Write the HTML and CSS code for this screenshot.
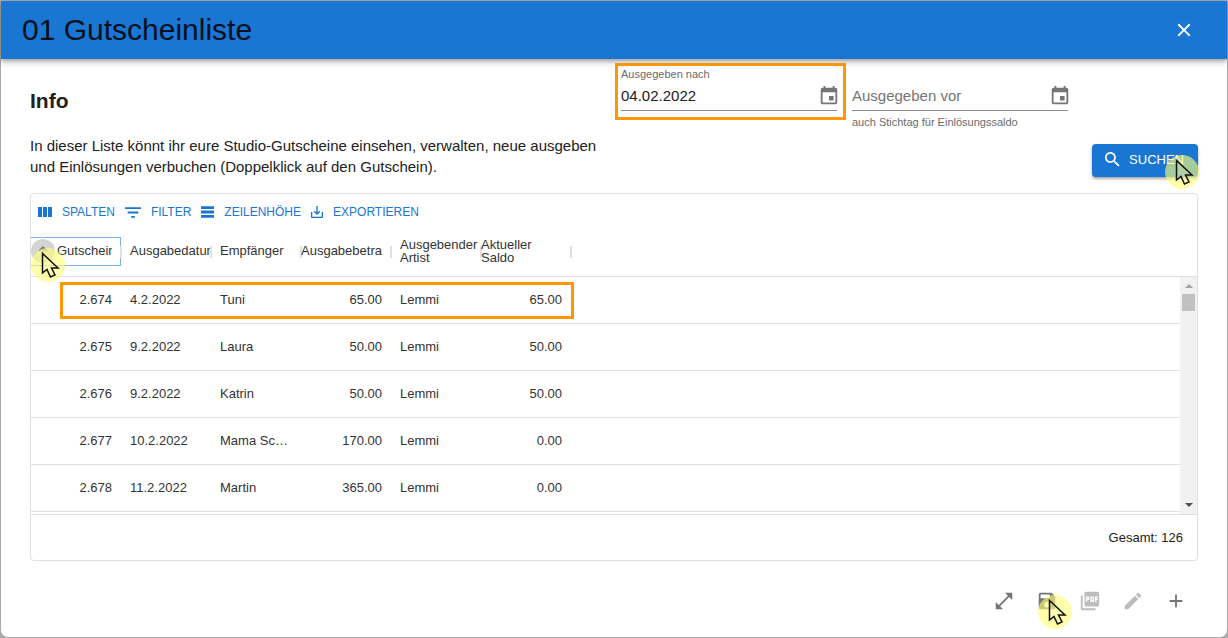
FILE: index.html
```html
<!DOCTYPE html>
<html lang="de">
<head>
<meta charset="utf-8">
<title>Gutscheinliste</title>
<link rel="stylesheet" href="styles.css">
</head>
<body>
<svg class="defs" aria-hidden="true">
  <symbol id="pointer" viewBox="0 0 36 36">
    <circle cx="18" cy="18" r="17" fill="rgb(255,255,120)" fill-opacity=".62"/>
    <path d="M12.500 6.500v19.500l4.500-3.500 3.500 7.500 4.500-2-3.500-7h6.500z" fill="#fff" fill-opacity=".1" stroke="#111" stroke-width="1.500"/>
  </symbol>
  <symbol id="event" viewBox="0 0 24 24">
    <path d="M17 12h-5v5h5v-5zM16 1v2H8V1H6v2H5c-1.110 0-1.990.9-1.990 2L3 19c0 1.100.89 2 2 2h14c1.100 0 2-.9 2-2V5c0-1.100-.9-2-2-2h-1V1h-2zm3 18H5V8h14v11z"/>
  </symbol>
</svg>
<main class="dialog">
  <header class="bar">
    <h1 class="bar-title">01 Gutscheinliste</h1>
    <button class="icon-btn close" aria-label="Schließen">
      <svg class="icon" viewBox="0 0 24 24"><path d="M19 6.410L17.590 5 12 10.590 6.410 5 5 6.410 10.590 12 5 17.590 6.410 19 12 13.410 17.590 19 19 17.590 13.410 12z"/></svg>
    </button>
  </header>

  <section class="top">
    <div class="info">
      <h2 class="info-title">Info</h2>
      <p class="info-text">In dieser Liste könnt ihr eure Studio-Gutscheine einsehen, verwalten, neue ausgeben und Einlösungen verbuchen (Doppelklick auf den Gutschein).</p>
    </div>
    <form class="search">
      <div class="fields">
        <div class="field marked">
          <label class="field-label" for="from">Ausgegeben nach</label>
          <div class="field-row">
            <input class="field-input" id="from" type="text" value="04.02.2022">
            <button class="icon-btn date" type="button" aria-label="Datum wählen"><svg class="icon"><use href="#event"/></svg></button>
          </div>
        </div>
        <div class="field">
          <span class="field-label"></span>
          <div class="field-row">
            <input class="field-input" id="to" type="text" placeholder="Ausgegeben vor" aria-label="Ausgegeben vor" aria-describedby="to-help">
            <button class="icon-btn date" type="button" aria-label="Datum wählen"><svg class="icon"><use href="#event"/></svg></button>
          </div>
          <span class="field-help" id="to-help">auch Stichtag für Einlösungssaldo</span>
        </div>
      </div>
      <button class="submit" type="button">
        <svg class="submit-icon" viewBox="3 3 18 18"><path d="M15.500 14h-.79l-.28-.27C15.410 12.590 16 11.110 16 9.500 16 5.910 13.090 3 9.500 3S3 5.910 3 9.500 5.910 16 9.500 16c1.610 0 3.090-.59 4.230-1.570l.27.28v.79l5 4.990L20.490 19l-4.990-5zm-6 0C7.010 14 5 11.990 5 9.500S7.010 5 9.500 5 14 7.010 14 9.500 11.990 14 9.500 14z"/></svg>
        SUCHEN
        <svg class="pointer on-submit"><use href="#pointer"/></svg>
      </button>
    </form>
  </section>

  <section class="grid">
    <div class="tools">
      <button class="tool"><svg width="14" height="10" viewBox="0 0 14 10"><path d="M0 0h4v10H0zM5 0h4v10H5zM10 0h4v10h-4z"/></svg>SPALTEN</button>
      <button class="tool"><svg width="16" height="11" viewBox="3 6 18 12"><path d="M10 18h4v-2h-4v2zM3 6v2h18V6H3zm3 7h12v-2H6v2z"/></svg>FILTER</button>
      <button class="tool"><svg width="13" height="12" viewBox="3 4 18 16"><path d="M21 8H3V4h18v4zm0 2H3v4h18v-4zm0 6H3v4h18v-4z"/></svg>ZEILENHÖHE</button>
      <button class="tool"><svg width="12" height="12" viewBox="3 3 18 18"><path d="M19 12v7H5v-7H3v7c0 1.100.9 2 2 2h14c1.100 0 2-.9 2-2v-7h-2zm-6 .67l2.590-2.580L17 11.500l-5 5-5-5 1.410-1.410L11 12.670V3h2z"/></svg>EXPORTIEREN</button>
    </div>
    <div class="rows">
      <table class="table">
        <colgroup><col class="col"><col class="col"><col class="col"><col class="col"><col class="col"><col class="col"><col></colgroup>
        <thead>
          <tr>
            <th class="head sorted">
              <div class="sort-box">
                <button class="sort" aria-label="Sortieren"><svg width="12" height="12" viewBox="0 0 12 12"><path d="M6 11V2M2 6l4-4 4 4" fill="none" stroke="#777" stroke-width="1.500"/></svg></button>
                <span class="clip">Gutschein</span>
                <svg class="pointer on-sort"><use href="#pointer"/></svg>
              </div>
            </th>
            <th class="head"><div class="clip wide">Ausgabedatum</div></th>
            <th class="head"><div class="clip">Empfänger</div></th>
            <th class="head flush"><div class="clip">Ausgabebetrag</div></th>
            <th class="head wrap">Ausgebender Artist</th>
            <th class="head flush wrap">Aktueller Saldo</th>
            <th class="rest"></th>
          </tr>
        </thead>
        <tbody>
          <tr><td class="num">2.674</td><td>4.2.2022</td><td>Tuni</td><td class="num">65.00</td><td>Lemmi</td><td class="num">65.00</td><td></td></tr>
          <tr><td class="num">2.675</td><td>9.2.2022</td><td>Laura</td><td class="num">50.00</td><td>Lemmi</td><td class="num">50.00</td><td></td></tr>
          <tr><td class="num">2.676</td><td>9.2.2022</td><td>Katrin</td><td class="num">50.00</td><td>Lemmi</td><td class="num">50.00</td><td></td></tr>
          <tr><td class="num">2.677</td><td>10.2.2022</td><td>Mama Sc…</td><td class="num">170.00</td><td>Lemmi</td><td class="num">0.00</td><td></td></tr>
          <tr><td class="num">2.678</td><td>11.2.2022</td><td>Martin</td><td class="num">365.00</td><td>Lemmi</td><td class="num">0.00</td><td></td></tr>
        </tbody>
      </table>
      <div class="row-mark"></div>
      <div class="scroll">
        <svg width="8" height="4" viewBox="0 0 8 4"><path d="M0 4l4-4 4 4z" fill="#a3a3a3"/></svg>
        <div class="thumb"></div>
        <svg width="8" height="4" viewBox="0 0 8 4"><path d="M0 0h8L4 4z" fill="#505050"/></svg>
      </div>
    </div>
    <footer class="total">Gesamt: 126</footer>
  </section>

  <nav class="actions">
    <button class="icon-btn action" aria-label="Vergrößern"><svg class="icon" viewBox="0 0 24 24"><path d="M21 11V3h-8l3.290 3.290-10 10L3 13v8h8l-3.290-3.290 10-10z"/></svg></button>
    <button class="icon-btn action" aria-label="Speichern"><svg class="icon" viewBox="0 0 24 24"><path d="M17 3H5c-1.110 0-2 .9-2 2v14c0 1.100.89 2 2 2h14c1.100 0 2-.9 2-2V7l-4-4zm-5 16c-1.660 0-3-1.340-3-3s1.340-3 3-3 3 1.340 3 3-1.340 3-3 3zm3-10H5V5h10v4z"/></svg><svg class="pointer on-save"><use href="#pointer"/></svg></button>
    <button class="icon-btn action" aria-label="PDF" disabled><svg class="icon" viewBox="0 0 24 24"><path d="M20 2H8c-1.100 0-2 .9-2 2v12c0 1.100.9 2 2 2h12c1.100 0 2-.9 2-2V4c0-1.100-.9-2-2-2zm-8.500 7.500c0 .83-.67 1.500-1.500 1.500H9v2H7.500V7H10c.83 0 1.500.67 1.500 1.500v1zm5 2c0 .83-.67 1.500-1.500 1.500h-2.500V7H15c.83 0 1.500.67 1.500 1.500v3zm4-3H19v1h1.500V11H19v2h-1.500V7h3v1.500zM9 9.500h1v-1H9v1zM4 6H2v14c0 1.100.9 2 2 2h14v-2H4V6zm10 5.500h1v-3h-1v3z"/></svg></button>
    <button class="icon-btn action" aria-label="Bearbeiten" disabled><svg class="icon" viewBox="0 0 24 24"><path d="M3 17.250V21h3.750L17.810 9.940l-3.750-3.750L3 17.250zM20.710 7.040c.39-.39.39-1.020 0-1.410l-2.340-2.340c-.39-.39-1.020-.39-1.410 0l-1.830 1.830 3.750 3.750 1.830-1.830z"/></svg></button>
    <button class="icon-btn action" aria-label="Hinzufügen"><svg class="icon" viewBox="0 0 24 24"><path d="M19 13h-6v6h-2v-6H5v-2h6V5h2v6h6v2z"/></svg></button>
  </nav>
</main>
</body>
</html>
```

FILE: styles.css
```css
*, *::after { box-sizing: border-box; }
body {
  margin: 0;
  background: #aaa;
  color: #212121;
  font-family: "Liberation Sans", Arial, sans-serif;
  font-size: 13px;
}
button, input { font: inherit; color: inherit; border: 0; background: none; padding: 0; }
svg { display: block; fill: currentColor; flex: none; }
.defs { display: none; }
.dialog {
  min-height: 100vh;
  display: flex;
  flex-direction: column;
  background: #fff;
  border: 1px solid #aaa;
  border-radius: 0 0 8px 8px;
}

.bar {
  display: flex;
  align-items: center;
  justify-content: space-between;
  height: 58px;
  padding: 0 32px 0 21px;
  background: #1976d2;
  box-shadow: 0 2px 4px rgba(0, 0, 0, .3), 0 4px 8px rgba(0, 0, 0, .12);
}
.bar-title { margin: 0; font-size: 30px; font-weight: 400; color: #07101c; }
.icon-btn { display: flex; align-items: center; justify-content: center; position: relative; color: #757575; }
.icon-btn:disabled { color: #bdbdbd; }
.icon { width: 22px; height: 22px; }
.close { color: #fff; }

.top { display: grid; grid-template-columns: 1fr 1fr; padding: 0 29px; height: 134px; }
.info { padding: 30px 16px 0 0; }
.info-title { margin: 0; font-size: 21px; line-height: 24px; }
.info-text { margin: 22px 0 0; font-size: 15px; line-height: 21px; }
.search { padding: 8px 0 16px 7px; display: flex; flex-direction: column; justify-content: space-between; }
.fields { display: flex; gap: 15px; }
.field { width: 216px; position: relative; color: #6b6b6b; }
.field-label { display: block; height: 14px; font-size: 11px; line-height: 14px; }
.field-row { display: flex; height: 30px; border-bottom: 1px solid #8c8c8c; }
.field-input { flex: 1; min-width: 0; font-size: 15px; }
.marked .field-input { color: #212121; }
.field-input::placeholder { color: #757575; opacity: 1; }
.date { width: 16px; }
.field-help { display: block; margin-top: 4px; font-size: 11px; line-height: 14px; }
.marked::after {
  content: "";
  position: absolute;
  inset: -4px -9px auto -6px;
  height: 57px;
  border: 3px solid #ff9800;
  pointer-events: none;
}
.submit {
  position: relative;
  align-self: flex-end;
  display: flex;
  align-items: center;
  gap: 9px;
  height: 33px;
  padding: 0 14px 2px 13px;
  border-radius: 4px;
  background: #1976d2;
  box-shadow: 0 2px 3px rgba(0, 0, 0, .35);
  color: #fff;
}
.submit-icon { width: 15px; height: 15px; }
.pointer { position: absolute; width: 36px; height: 36px; pointer-events: none; z-index: 2; }
.on-submit { left: 72px; top: 10px; }
.on-sort { left: -1px; top: 9px; }
.on-save { left: 12px; top: 15px; }

.grid { margin: 0 29px; border: 1px solid #e0e0e0; border-radius: 4px; }
.tools { display: flex; gap: 10px; height: 32px; padding: 4px 7px 0; }
.tool { display: flex; align-items: center; gap: 10px; color: #1976d2; font-size: 12px; }
.rows { position: relative; padding-bottom: 2px; border-bottom: 1px solid #e0e0e0; }
.table { width: 100%; table-layout: fixed; border-collapse: separate; border-spacing: 0; color: #333; }
.col { width: 90px; }
th, td { padding: 0 9px; border-bottom: 1px solid #e0e0e0; text-align: left; white-space: nowrap; font-weight: 400; }
th { height: 51px; }
td { height: 47px; padding-bottom: 2px; }
.num { text-align: right; }
.head { position: relative; line-height: 13px; }
.head::after {
  content: "";
  position: absolute;
  right: -1px;
  top: 20px;
  width: 2px;
  height: 12px;
  background: #e0e0e0;
}
.clip { overflow: hidden; line-height: 18px; }
.wide { margin-right: -8px; }
.flush { padding-left: 0; }
.wrap { white-space: normal; padding-right: 4px; }
.sorted { padding: 0; }
.sort-box { position: relative; display: flex; align-items: center; gap: 2px; height: 29px; padding-right: 8px; border: 1px solid #7fb2e5; border-left: 0; }
.sort { display: flex; align-items: center; justify-content: center; width: 24px; height: 24px; border-radius: 50%; background: #d4d4d4; flex: none; }
.row-mark { position: absolute; left: 29px; top: 56px; width: 514px; height: 37px; border: 3px solid #ff9800; pointer-events: none; }
.scroll {
  position: absolute;
  right: 0;
  top: 51px;
  bottom: 0;
  width: 17px;
  padding: 7px 0;
  display: flex;
  flex-direction: column;
  align-items: center;
  background: #f1f1f1;
}
.thumb { width: 13px; height: 17px; margin: 6px 0 auto; background: #c1c1c1; }
.total { display: flex; align-items: center; justify-content: flex-end; height: 45px; padding-right: 14px; }

.actions { display: flex; justify-content: flex-end; padding: 18px 30px 0; }
.action { width: 43px; height: 44px; }
```
